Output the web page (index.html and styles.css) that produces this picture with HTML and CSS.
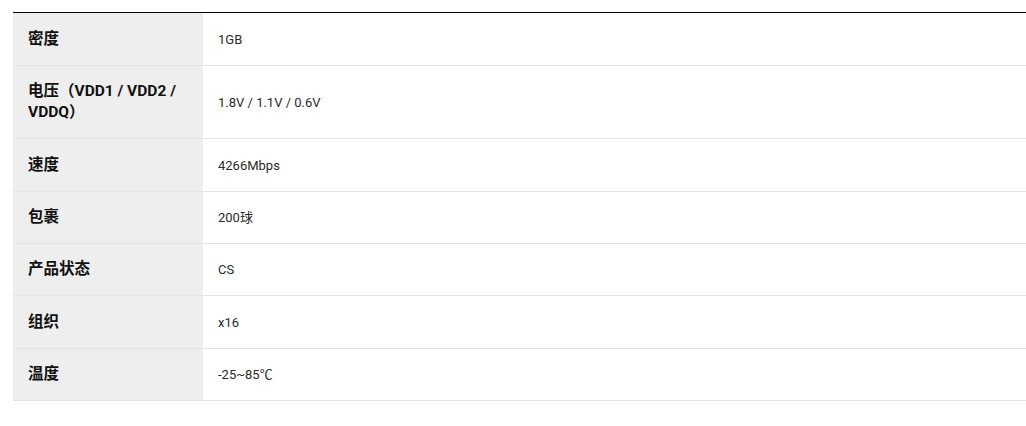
FILE: index.html
```html
<!DOCTYPE html>
<html lang="zh-CN">
<head>
<meta charset="utf-8">
<title>规格</title>
<link rel="stylesheet" href="styles.css">
</head>
<body>
<div class="wrap">
<table class="spec">
<tbody>
<tr class="tall"><th>密度</th><td>1GB</td></tr>
<tr><th>电压（VDD1 / VDD2 / VDDQ）</th><td>1.8V / 1.1V / 0.6V</td></tr>
<tr class="tall"><th>速度</th><td>4266Mbps</td></tr>
<tr><th>包裹</th><td>200球</td></tr>
<tr><th>产品状态</th><td>CS</td></tr>
<tr class="tall"><th>组织</th><td>x16</td></tr>
<tr><th>温度</th><td>-25~85℃</td></tr>
</tbody>
</table>
</div>
</body>
</html>
```
FILE: styles.css
```css
html, body {
  margin: 0;
  padding: 0;
  background: #fff;
  overflow: hidden;
}
.wrap {
  padding: 12px 0 0 13px;
}
.spec {
  width: 1040px;
  border-collapse: collapse;
  border-top: 1px solid #000;
  font-family: Roboto, "Noto Sans CJK SC", sans-serif;
}
.spec th,
.spec td {
  border-bottom: 1px solid #e4e4e4;
  padding: 15px;
  vertical-align: middle;
  text-align: left;
  line-height: 21px;
}
.spec .tall th,
.spec .tall td {
  padding-top: 16px;
}
.spec th {
  width: 160px;
  background: #eeeeee;
  color: #111;
  font-size: 15.5px;
  font-weight: 700;
}
.spec td {
  background: #fff;
  color: #2a2a2a;
  font-size: 13px;
  font-weight: 400;
}
```
